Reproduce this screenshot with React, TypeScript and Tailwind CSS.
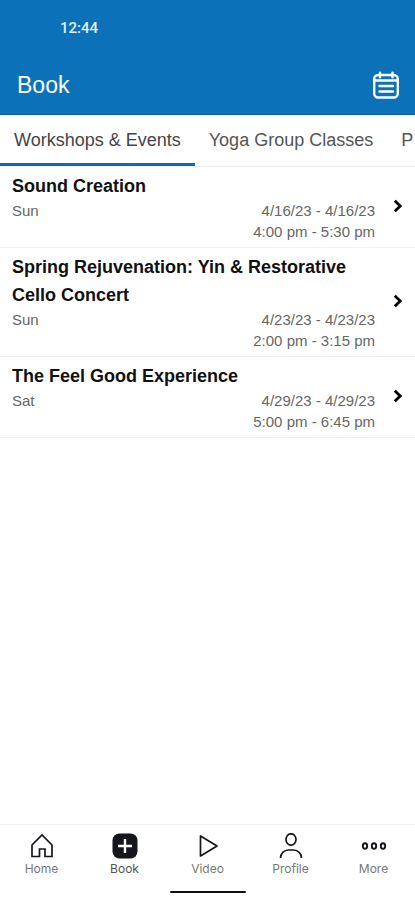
import { useState } from 'react'
import type { ReactNode } from 'react'

interface ClassEvent {
  id: number
  title: string
  day: string
  dates: string
  time: string
}

const tabs = ['Workshops & Events', 'Yoga Group Classes', 'P']

const events: ClassEvent[] = [
  {
    id: 1,
    title: 'Sound Creation',
    day: 'Sun',
    dates: '4/16/23 - 4/16/23',
    time: '4:00 pm - 5:30 pm'
  },
  {
    id: 2,
    title: 'Spring Rejuvenation: Yin & Restorative Cello Concert',
    day: 'Sun',
    dates: '4/23/23 - 4/23/23',
    time: '2:00 pm - 3:15 pm'
  },
  {
    id: 3,
    title: 'The Feel Good Experience',
    day: 'Sat',
    dates: '4/29/23 - 4/29/23',
    time: '5:00 pm - 6:45 pm'
  }
]

function CalendarIcon() {
  return (
    <svg viewBox="0 0 28 28" className="h-7 w-7" fill="none" stroke="currentColor" strokeWidth="2.4" strokeLinecap="round">
      <rect x="2.200" y="4" width="23.600" height="22.500" rx="4" />
      <path d="M2.500 9.500h23M8 1.800v4.500M20.500 1.800v4.500M7.500 15h13.500M7.500 20.500h13.500" />
    </svg>
  )
}

function ChevronIcon() {
  return (
    <svg viewBox="0 0 10 14" className="h-3.5 w-2.5" fill="none" stroke="currentColor" strokeWidth="2.8">
      <path d="M1.800 1.800L7.200 7l-5.400 5.200" />
    </svg>
  )
}

const navItems: { label: string; icon: ReactNode }[] = [
  {
    label: 'Home',
    icon: <path d="M3 12L13 2l10 10v11.500h-7v-7.500h-5.500v7.500H3z" />
  },
  {
    label: 'Book',
    icon: (
      <>
        <rect x="0.5" y="0.5" width="25" height="25" rx="7" fill="currentColor" stroke="none" />
        <path d="M13 6v14M6 13h14" stroke="white" strokeWidth="2.4" />
      </>
    )
  },
  {
    label: 'Video',
    icon: <path d="M5.500 3v20L22 13z" strokeLinejoin="round" />
  },
  {
    label: 'Profile',
    icon: (
      <>
        <ellipse cx="13" cy="6.500" rx="5" ry="5.700" />
        <path d="M2.500 25c0-4.500 3.500-8 8-8h5c4.500 0 8 3.500 8 8" />
      </>
    )
  },
  {
    label: 'More',
    icon: (
      <g strokeWidth="1.9">
        <ellipse cx="4" cy="13" rx="2.200" ry="2.800" />
        <ellipse cx="13" cy="13" rx="2.200" ry="2.800" />
        <ellipse cx="22" cy="13" rx="2.200" ry="2.800" />
      </g>
    )
  }
]

export default function App() {
  const [activeTab, setActiveTab] = useState(tabs[0])
  const [activeNav, setActiveNav] = useState('Book')

  return (
    <div className="flex min-h-screen flex-col bg-white font-['Liberation_Sans',sans-serif]">
      <header className="bg-[#0b72b9] text-white">
        <div className="h-14 px-15 pt-4 font-['Roboto',sans-serif] text-[15px] leading-6 font-medium text-[#e3f0fa]">
          12:44
        </div>
        <div className="flex h-[59px] items-center justify-between border-b border-[#0a5ea6] pr-[15px] pl-[17px]">
          <h1 className="text-[23px]">Book</h1>
          <button aria-label="Calendar">
            <CalendarIcon />
          </button>
        </div>
      </header>

      <nav className="flex h-[52px] overflow-hidden border-b border-[#ececee]">
        {tabs.map((tab) => (
          <button
            key={tab}
            onClick={() => setActiveTab(tab)}
            className={`shrink-0 border-b-[3px] px-[14px] pt-0.5 text-lg whitespace-nowrap ${
              activeTab === tab
                ? 'border-[#1767b5] text-[#444]'
                : 'border-transparent text-[#555]'
            }`}
          >
            {tab}
          </button>
        ))}
      </nav>

      <main className="flex-1">
        <ul>
          {events.map((event) => (
            <li key={event.id} className="border-b border-[#f0f0f1]">
              <a href="#" className="flex items-center py-[5px] pr-3 pl-3">
                <div className="flex-1">
                  <h2 className="text-lg leading-7 font-bold text-[#111]">{event.title}</h2>
                  <div className="flex justify-between text-[15px] leading-[21px] text-[#666]">
                    <span>{event.day}</span>
                    <div className="text-right">
                      <p>{event.dates}</p>
                      <p>{event.time}</p>
                    </div>
                  </div>
                </div>
                <span className="ml-[18px] pb-0.5 text-black">
                  <ChevronIcon />
                </span>
              </a>
            </li>
          ))}
        </ul>
      </main>

      <footer className="border-t border-[#f0f0f1]">
        <nav className="grid grid-cols-5 pt-2">
          {navItems.map((item) => (
            <button
              key={item.label}
              onClick={() => setActiveNav(item.label)}
              className="flex flex-col items-center"
            >
              <svg viewBox="0 0 26 26" className="h-[26px] w-[26px] text-[#15151d]" fill="none" stroke="currentColor" strokeWidth="1.7">
                {item.icon}
              </svg>
              <span
                className={`font-['Inter',sans-serif] text-xs leading-5 ${
                  activeNav === item.label ? 'text-[#555]' : 'text-[#777]'
                }`}
              >
                {item.label}
              </span>
            </button>
          ))}
        </nav>
        <div className="mx-auto mt-3 mb-[7px] h-0.5 w-[76px] rounded-full bg-[#111]" />
      </footer>
    </div>
  )
}
